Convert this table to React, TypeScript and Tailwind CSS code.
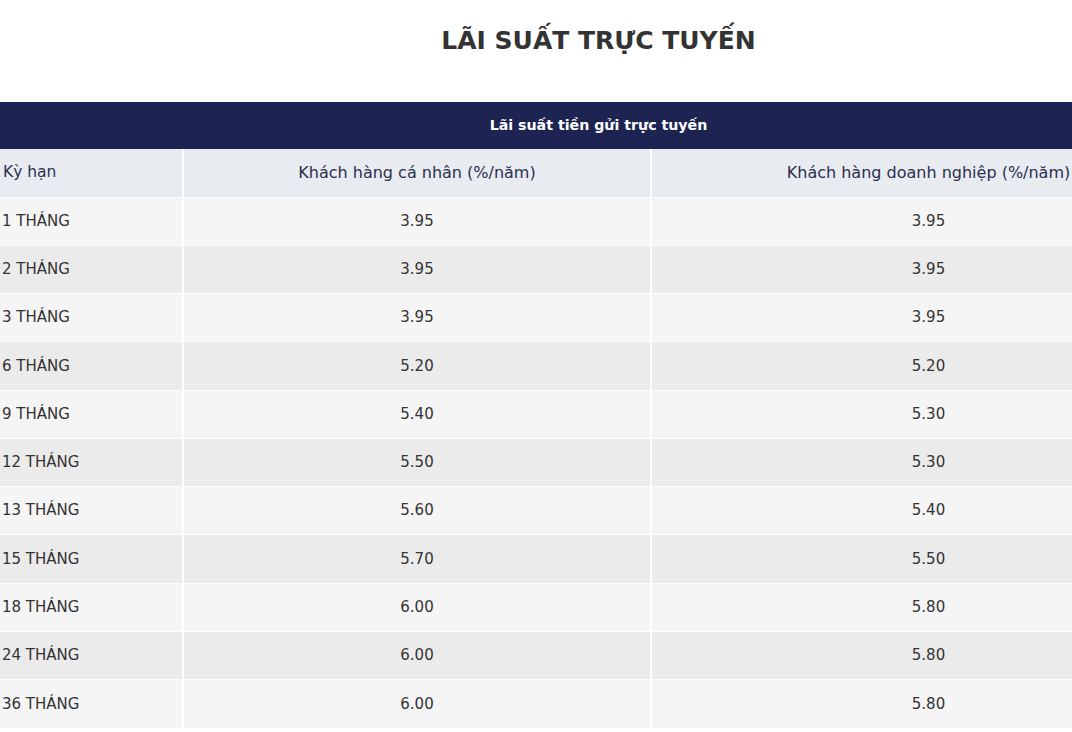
const rows = [
  ["1 THÁNG", "3.95", "3.95"],
  ["2 THÁNG", "3.95", "3.95"],
  ["3 THÁNG", "3.95", "3.95"],
  ["6 THÁNG", "5.20", "5.20"],
  ["9 THÁNG", "5.40", "5.30"],
  ["12 THÁNG", "5.50", "5.30"],
  ["13 THÁNG", "5.60", "5.40"],
  ["15 THÁNG", "5.70", "5.50"],
  ["18 THÁNG", "6.00", "5.80"],
  ["24 THÁNG", "6.00", "5.80"],
  ["36 THÁNG", "6.00", "5.80"],
];

export default function App() {
  return (
    <div className="w-full overflow-hidden bg-white">
      <div className="w-[1205px] font-['DejaVu_Sans',sans-serif] text-[#333]">
        <h1 className="h-[102px] pt-[22px] pr-[8px] text-center text-[25px] font-bold text-[#333]">
          LÃI SUẤT TRỰC TUYẾN
        </h1>

        <table className="w-full table-fixed border-collapse text-[15px]">
          <colgroup>
            <col className="w-[183px]" />
            <col className="w-[468px]" />
            <col className="w-[554px]" />
          </colgroup>
          <thead>
            <tr className="h-[47px] bg-[#1e2452]">
              <th colSpan={3} className="pr-[8px] text-center text-[14.2px] font-bold text-white">
                Lãi suất tiền gửi trực tuyến
              </th>
            </tr>
            <tr className="h-[48px] bg-[#e8ebef] text-[16px] text-[#2b2f4f]">
              <td className="border-r-2 border-white pl-[3px] text-left text-[15.5px]">Kỳ hạn</td>
              <td className="border-r-2 border-white text-center">Khách hàng cá nhân (%/năm)</td>
              <td className="text-center">Khách hàng doanh nghiệp (%/năm)</td>
            </tr>
          </thead>
          <tbody>
            {rows.map((r, i) => (
              <tr
                key={r[0]}
                className={`h-[48.27px] border-t border-white ${i % 2 === 0 ? "bg-[#f5f5f5]" : "bg-[#ebebeb]"}`}
              >
                <td className="border-r-2 border-white pl-[2px] text-left">{r[0]}</td>
                <td className="border-r-2 border-white text-center">{r[1]}</td>
                <td className="text-center">{r[2]}</td>
              </tr>
            ))}
          </tbody>
        </table>
      </div>
    </div>
  );
}
